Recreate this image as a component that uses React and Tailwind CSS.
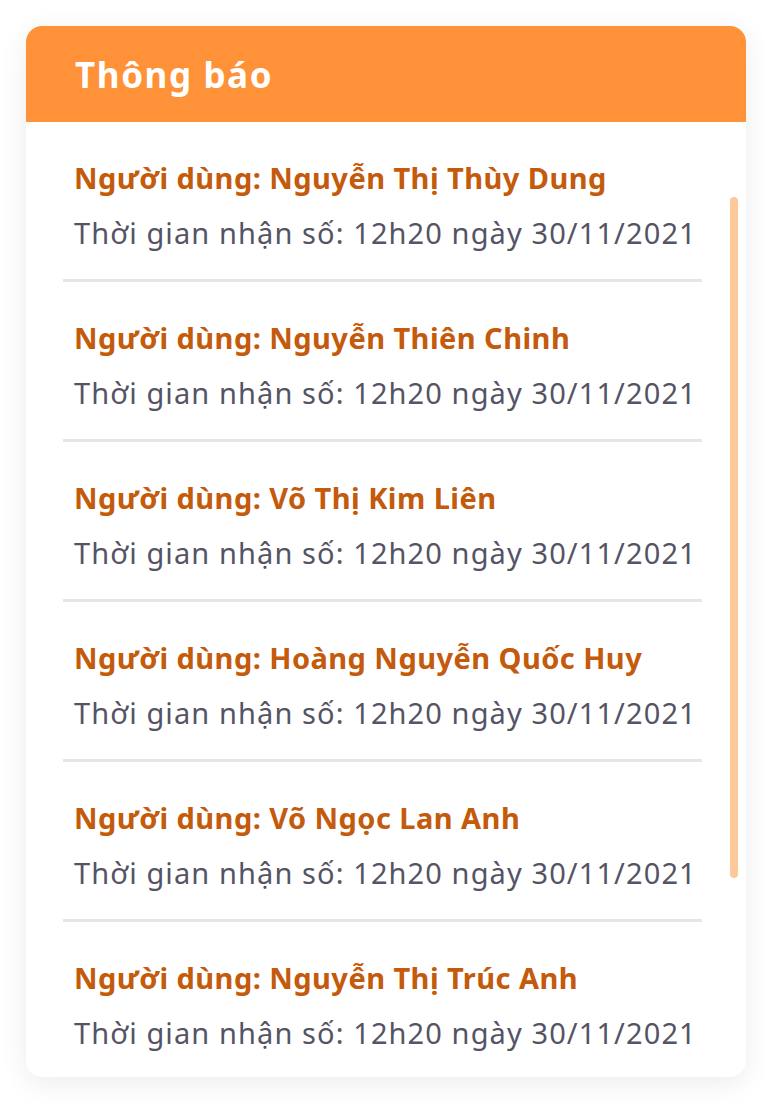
import React from 'react';

const notifications = [
    'Nguyễn Thị Thùy Dung',
    'Nguyễn Thiên Chinh',
    'Võ Thị Kim Liên',
    'Hoàng Nguyễn Quốc Huy',
    'Võ Ngọc Lan Anh',
    'Nguyễn Thị Trúc Anh',
];

const App = () => {
    return (
        <div className="min-h-screen bg-white pt-[26px] pl-[26px] font-['Noto_Sans','Open_Sans',sans-serif]">
            <div className="w-[720px] h-[1051px] bg-white rounded-[16px] shadow-[0_6px_28px_rgba(0,0,0,0.08)] flex flex-col overflow-hidden">
                <div className="h-[96px] shrink-0 bg-[#FF9238] flex items-center px-[49px]">
                    <h1 className="text-[35px] font-bold text-white leading-none tracking-[1.6px]">Thông báo</h1>
                </div>

                <div className="relative flex-1 overflow-hidden">
                    <div className="ml-[37px] w-[639px]">
                        {notifications.map((name, i) => (
                            <div
                                key={i}
                                className={`pl-[11px] pt-[38px] pb-[28px] ${i < notifications.length - 1 ? 'border-b-[3px] border-[#E6E6E6]' : ''}`}
                            >
                                <p className="h-[36px] leading-[36px] text-[29px] font-bold text-[#C45A0C] whitespace-nowrap tracking-[0.45px]">
                                    Người dùng: {name}
                                </p>
                                <p className="mt-[19px] h-[36px] leading-[36px] text-[29px] text-[#545465] whitespace-nowrap tracking-[1.1px]">
                                    Thời gian nhận số: 12h20 ngày 30/11/2021
                                </p>
                            </div>
                        ))}
                    </div>

                    {/* thanh cuộn */}
                    <div className="absolute right-[8px] top-[75px] w-[8px] h-[681px] rounded-full bg-[#FFC898]" />
                </div>
            </div>
        </div>
    );
};

export default App;
